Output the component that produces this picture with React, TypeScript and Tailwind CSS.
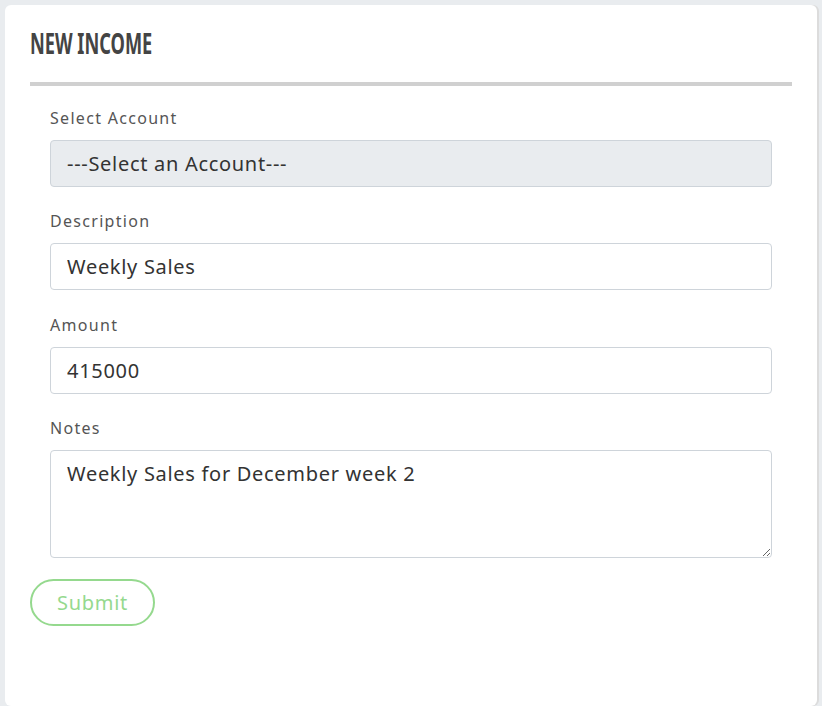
import { useState } from "react"

const App = () => {
  const [form, setForm] = useState({
    account: "",
    description: "Weekly Sales",
    amount: "415000",
    notes: "Weekly Sales for December week 2",
  })

  const handleChange = (e: React.ChangeEvent<HTMLInputElement | HTMLTextAreaElement | HTMLSelectElement>) => {
    setForm((prev) => ({ ...prev, [e.target.name]: e.target.value }))
  }

  const label = "block text-[16px] leading-6 text-[#555] tracking-[1.3px] mb-[10px]"
  const field =
    "w-full h-[47px] px-4 border border-[#ced4da] rounded-[4px] text-[20px] tracking-[0.7px] text-[#333] outline-none bg-white"

  return (
    <div className="font-['Noto_Sans',sans-serif] min-h-screen bg-[#e9ecef] pl-[5px] pt-[5px] pr-[5px]">
      <div className="bg-white rounded-[6px] min-h-[701px] px-[25px] pt-[24px] shadow-[2px_0_0_#dcdcdc]">
        <div className="pb-[22px] border-b-4 border-[#d0d0d0]">
          <h2 className="inline-block origin-left scale-x-[0.65] font-['Noto_Sans',sans-serif] font-bold text-[28px] leading-[28px] text-[#444] whitespace-nowrap">
            NEW INCOME
          </h2>
        </div>

        <div className="px-5 pt-[20px]">
          <div className="mb-[22px]">
            <label className={label}>Select Account</label>
            <select
              name="account"
              value={form.account}
              onChange={handleChange}
              className="w-full h-[47px] px-4 border border-[#ced4da] rounded-[4px] text-[20px] tracking-[0.7px] text-[#333] outline-none bg-[#e9ecef] appearance-none"
            >
              <option value="">---Select an Account---</option>
            </select>
          </div>

          <div className="mb-[23px]">
            <label className={label}>Description</label>
            <input name="description" value={form.description} onChange={handleChange} className={field} />
          </div>

          <div className="mb-[22px]">
            <label className={label}>Amount</label>
            <input name="amount" value={form.amount} onChange={handleChange} className={field} />
          </div>

          <div>
            <label className={label}>Notes</label>
            <textarea
              name="notes"
              value={form.notes}
              onChange={handleChange}
              className="block w-full h-[108px] px-4 py-[10px] border border-[#ced4da] rounded-[4px] text-[20px] leading-[26px] tracking-[0.7px] text-[#333] outline-none"
            />
          </div>
        </div>

        <button className="mt-[21px] h-[47px] w-[125px] rounded-full border-2 border-[#95d98e] text-[#95d98e] text-[20px] tracking-[0.7px] bg-white">
          Submit
        </button>
      </div>
    </div>
  )
}

export default App
